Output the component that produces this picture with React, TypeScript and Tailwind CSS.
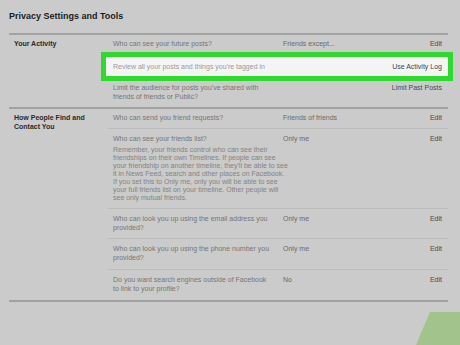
const font = { fontFamily: '"Liberation Sans", Arial, sans-serif' };

type Row = {
  question: string[];
  value?: string;
  action: string;
  note?: string[];
  pt: string;
  h: string;
  divider?: boolean;
};

const findRows: Row[] = [
  {
    question: ["Who can send you friend requests?"],
    value: "Friends of friends",
    action: "Edit",
    pt: "pt-[4px]",
    h: "h-[20px]",
    divider: true,
  },
  {
    question: ["Who can see your friends list?"],
    value: "Only me",
    action: "Edit",
    note: [
      "Remember, your friends control who can see their",
      "friendships on their own Timelines. If people can see",
      "your friendship on another timeline, they'll be able to see",
      "it in News Feed, search and other places on Facebook.",
      "If you set this to Only me, only you will be able to see",
      "your full friends list on your timeline. Other people will",
      "see only mutual friends.",
    ],
    pt: "pt-[5px]",
    h: "h-[80px]",
    divider: true,
  },
  {
    question: ["Who can look you up using the email address you", "provided?"],
    value: "Only me",
    action: "Edit",
    pt: "pt-[5px]",
    h: "h-[30px]",
    divider: true,
  },
  {
    question: ["Who can look you up using the phone number you", "provided?"],
    value: "Only me",
    action: "Edit",
    pt: "pt-[5px]",
    h: "h-[31px]",
    divider: true,
  },
  {
    question: ["Do you want search engines outside of Facebook", "to link to your profile?"],
    value: "No",
    action: "Edit",
    pt: "pt-[5px]",
    h: "h-[30px]",
  },
];

function SettingRow({ row }: { row: Row }) {
  return (
    <div
      className={`${row.h} ${row.pt} flex text-[7px] leading-[9px] ${
        row.divider ? "border-b border-[#bcbcbc]" : ""
      }`}
    >
      <div className="w-[170px] pl-[5px]">
        <div className="text-[#767676]">
          {row.question.map((q, i) => (
            <div key={i}>{q}</div>
          ))}
        </div>
        {row.note && (
          <div className="mt-[3px] text-[#838383] leading-[8px]">
            {row.note.map((n, i) => (
              <div key={i} className="whitespace-nowrap">
                {n}
              </div>
            ))}
          </div>
        )}
      </div>
      <div className="flex-1 pl-[5px] text-[#6a6a6a]">{row.value}</div>
      <div className="pr-[6px] text-[#4a4a4a]">{row.action}</div>
    </div>
  );
}

export default function App() {
  return (
    <div
      className="relative w-[460px] h-[345px] overflow-hidden bg-[#cbcbcb]"
      style={font}
    >
      <div className="pl-[9px] pt-[10px] h-[33px] text-[9px] leading-[12px] font-bold text-[#1c1c1c]">
        Privacy Settings and Tools
      </div>

      <div className="ml-[9px] mr-[12px]">
        {/* Your Activity */}
        <div className="flex border-t-2 border-[#a2a2a2] h-[74px]">
          <div className="w-[99px] pl-[5px] pt-[4px] text-[7px] leading-[9px] font-bold text-[#2a2a2a]">
            Your Activity
          </div>
          <div className="flex-1">
            <div className="h-[17px] pt-[4px] flex text-[7px] leading-[9px]">
              <div className="w-[170px] pl-[5px] text-[#767676]">
                Who can see your future posts?
              </div>
              <div className="flex-1 pl-[5px] text-[#6a6a6a]">Friends except...</div>
              <div className="pr-[6px] text-[#4a4a4a]">Edit</div>
            </div>
            <div className="-ml-[7px] -mr-[5px] h-[29px] border-[5px] border-[#2fd92f] bg-[#f4f4f4] flex text-[7px] leading-[9px] pt-[5px]">
              <div className="flex-1 pl-[7px] text-[#9a9a9a]">
                Review all your posts and things you're tagged in
              </div>
              <div className="pr-[6px] text-[#444]">Use Activity Log</div>
            </div>
            <div className="pt-[2px] flex text-[7px] leading-[9px]">
              <div className="w-[170px] pl-[5px] text-[#767676]">
                <div>Limit the audience for posts you've shared with</div>
                <div>friends of friends or Public?</div>
              </div>
              <div className="flex-1" />
              <div className="pr-[6px] text-[#4a4a4a]">Limit Past Posts</div>
            </div>
          </div>
        </div>

        {/* How People Find and Contact You */}
        <div className="flex border-t-2 border-b-2 border-[#a2a2a2]">
          <div className="w-[99px] pl-[5px] pt-[4px] text-[7px] leading-[9px] font-bold text-[#2a2a2a]">
            <div>How People Find and</div>
            <div>Contact You</div>
          </div>
          <div className="flex-1">
            {findRows.map((row, i) => (
              <SettingRow key={i} row={row} />
            ))}
          </div>
        </div>
      </div>

      <svg
        className="absolute left-0 top-0"
        width="460"
        height="345"
        viewBox="0 0 460 345"
      >
        <polygon points="416,345 430,312 460,312 460,345" fill="#a3c38c" />
      </svg>
    </div>
  );
}
